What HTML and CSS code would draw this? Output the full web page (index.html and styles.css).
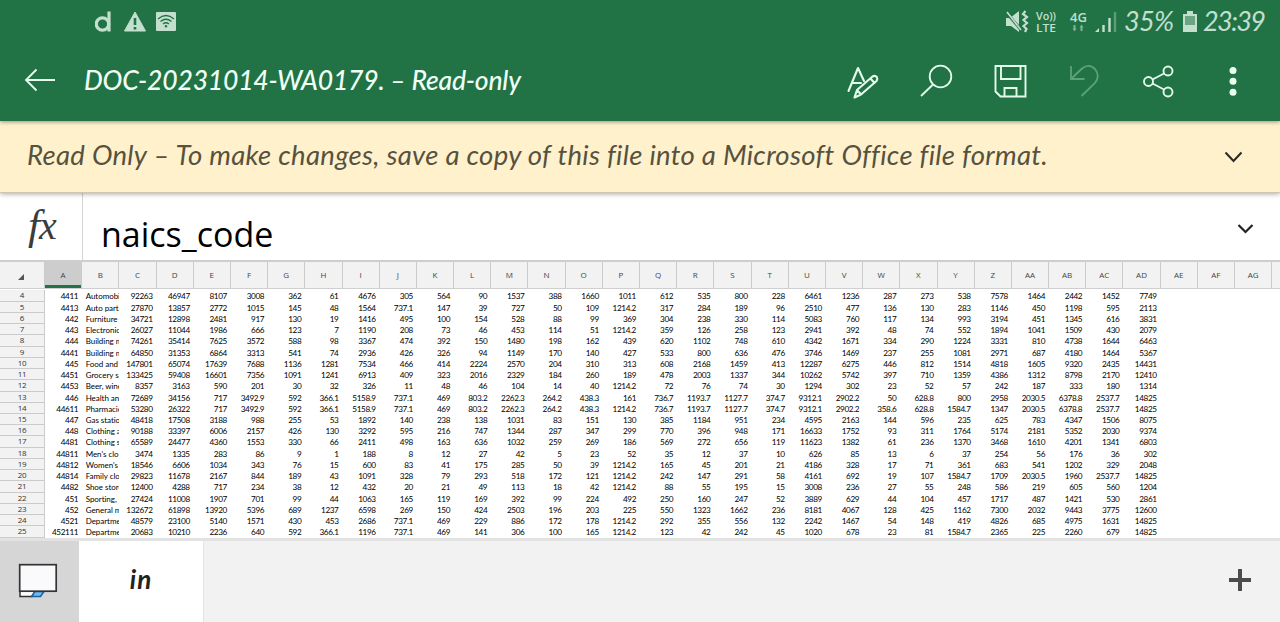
FILE: index.html
```html
<!DOCTYPE html>
<html lang="en">
<head>
<meta charset="utf-8">
<title>DOC-20231014-WA0179.</title>
<link rel="stylesheet" href="styles.css">
</head>
<body>
<div class="app">
  <header class="top">
    <div class="status">
      <svg class="status-left" width="84" height="24" viewBox="0 0 84 24">
        <g fill="none" stroke="#c3dfcd" stroke-width="3.2"><circle cx="7.500" cy="14" r="6.2"/><path d="M14 1.5V21.5"/></g>
        <path d="M40 2L50.500 21H29.500Z" fill="#c3dfcd" stroke="#c3dfcd" stroke-linejoin="round"/>
        <path d="M40 8V15M40 17V19.500" stroke="#217346" stroke-width="2.600"/>
        <rect x="61" y="2" width="20" height="19" rx="1" fill="#c3dfcd"/>
        <g fill="none" stroke="#217346" stroke-width="1.300"><path d="M63 9Q71 2 79 9M65.500 11.500Q71 7 76.500 11.500M68 14Q71 11.500 74 14"/></g>
        <circle cx="71" cy="16.200" r="1.200" fill="#217346"/>
      </svg>
      <svg class="status-right" width="272" height="43" viewBox="0 -9 272 43" fill="#c3dfcd">
        <path d="M6 9H10L19 2V23L11 17H6Z"/><path d="M6 3L22 22" stroke="#217346" stroke-width="3"/><path d="M7 3L21 21" stroke="#c3dfcd" stroke-width="1.600"/>
        <path d="M25.500 2L23 5L27 8L23.500 11L27 14L23.500 17L26.500 20L25 23" fill="none" stroke="#c3dfcd" stroke-width="2.200"/>
        <text x="36" y="10.500" class="tiny" textLength="20" lengthAdjust="spacingAndGlyphs">Vo))</text>
        <text x="36" y="22.700" class="tiny" textLength="20" lengthAdjust="spacingAndGlyphs">LTE</text>
        <text x="70" y="12.500" class="tiny net" textLength="17">4G</text>
        <path d="M74.500 16V20M81.500 18V22" stroke="#7fb393" stroke-width="2"/><path d="M72.500 19.500H76.500L74.500 22.500ZM79.500 18.500H83.500L81.500 15.500Z" fill="#7fb393"/>
        <path d="M95 23L99 19V23Z"/><path d="M103.500 23V16M109.500 23V9" stroke="#c3dfcd" stroke-width="2.400"/><path d="M115 23V3" stroke="#5c9c77" stroke-width="2.400"/>
        <text x="124" y="22" class="pen" textLength="50">35%</text>
        <path d="M183 5H187V2H193V5H197V23H183Z"/><rect x="185" y="7" width="10" height="9" fill="#6ba583"/>
        <text x="203" y="22" class="pen" textLength="63">23:39</text>
      </svg>
    </div>
    <div class="appbar">
      <svg class="back" width="34" height="26" viewBox="0 0 34 26" fill="none" stroke="#e8fff0" stroke-width="1.800"><path d="M32 13H3M13.500 2.500L3 13L13.500 23.500"/></svg>
      <h1 class="title">DOC-20231014-WA0179. – Read-only</h1>
      <nav class="tools">
        <span class="tool"><svg width="36" height="36" viewBox="0 0 36 36" fill="none" stroke="#e4fbec" stroke-width="2.100" stroke-linejoin="round" stroke-linecap="round"><path d="M3.500 27L13 4L19 17M7.500 19H16"/><path d="M9.500 33.500L12 26L27.500 12.500Q30 11 31.800 13Q33 15 31.500 17L16 30.500ZM12 26L16 30.500M25.500 14.500L29.500 19"/></svg></span>
        <span class="tool"><svg width="36" height="36" viewBox="0 0 36 36" fill="none" stroke="#e4fbec" stroke-width="1.800"><circle cx="21.500" cy="12.500" r="10.800"/><path d="M14 20.500L2 32"/></svg></span>
        <span class="tool"><svg width="36" height="36" viewBox="0 0 36 36" fill="none" stroke="#e4fbec" stroke-width="1.900"><path d="M2.500 2H32.500V32.500H7.500L2.500 27.500ZM8 2V15H27.500V2M11.500 32V24H23.500V32"/></svg></span>
        <span class="tool"><svg width="36" height="36" viewBox="0 0 36 36" fill="none" stroke="#5da17b" stroke-width="1.800"><path d="M4 2V15H17.500M4 15L15 4.500Q22 -1 28 5Q33.500 12 28 19L14.500 32"/></svg></span>
        <span class="tool"><svg width="36" height="36" viewBox="0 0 36 36" fill="none" stroke="#e4fbec" stroke-width="1.900"><circle cx="7.500" cy="17.500" r="4.500"/><circle cx="27" cy="7" r="4.500"/><circle cx="27" cy="28" r="4.500"/><path d="M11.500 15.500L23 9.500M11.500 19.500L23 25.500"/></svg></span>
        <span class="tool"><svg width="36" height="36" viewBox="0 0 36 36" fill="#e9fff0"><circle cx="18" cy="6.500" r="3.500"/><circle cx="18" cy="17.300" r="3.500"/><circle cx="18" cy="28.300" r="3.500"/></svg></span>
      </nav>
    </div>
  </header>
  <section class="notice">
    <p class="notice-text">Read Only – To make changes, save a copy of this file into a Microsoft Office file format.</p>
    <svg class="chev-big" width="20" height="14" viewBox="0 0 20 14"><path d="M1.500 2.500L9.500 11L17.500 2.500" fill="none" stroke="#2b2a22" stroke-width="2"/></svg>
  </section>
  <section class="formula">
    <div class="fx"><i>f</i><i class="x">x</i></div>
    <div class="value">naics_code</div>
    <svg class="chev" width="18" height="12" viewBox="0 0 18 12"><path d="M2.500 3L9.500 10L16.500 3" fill="none" stroke="#222" stroke-width="2.200"/></svg>
  </section>
  <main class="sheet" id="sheet"></main>
  <footer class="tabs">
    <div class="all-sheets"><svg width="42" height="38" viewBox="0 0 42 38"><path d="M3 27V33.500H15L19 27Z" fill="#fff" stroke="#333" stroke-width="1.500"/><path d="M18 28.500H27L23.500 33.500H14.500Z" fill="#72b8ee" stroke="#1d5f9c" stroke-width="1.500"/><rect x="2.700" y="1.700" width="36.500" height="26.500" fill="#fafafc" stroke="#333" stroke-width="1.700"/></svg></div>
    <div class="tab">in</div>
    <svg class="add" width="22" height="22" viewBox="0 0 22 22"><path d="M11 0V22M0 11H22" stroke="#4c4c4c" stroke-width="4"/></svg>
  </footer>
</div>
<script src="sheet.js"></script>
</body>
</html>
```
FILE: styles.css
```css
* { box-sizing: border-box; }
body { margin: 0; background: #fff; font-family: "Open Sans", sans-serif; }
.app { width: 1280px; height: 622px; display: flex; flex-direction: column; overflow: hidden; }
.top { height: 121px; flex: none; background: #217346; position: relative; z-index: 2; box-shadow: 0 1px 4px rgba(0,0,0,.4); }
.status { height: 43px; display: flex; justify-content: space-between; padding: 0 8px 0 95px; }
.status-left { margin-top: 10px; }
.status-right { flex: none; }
.tiny { font: 600 11px "Open Sans", sans-serif; }
.net { font-size: 13px; }
.pen { font: italic 27px Lato, sans-serif; }
.appbar { height: 78px; display: flex; align-items: center; padding: 0 10px 4px 23px; }
.back { flex: none; }
.title { margin: 0 0 0 27px; font: italic 500 26.500px Lato, sans-serif; letter-spacing: -.2px; color: #effff5; white-space: nowrap; }
.tools { margin-left: auto; display: flex; padding-top: 3px; }
.tool { width: 74px; height: 36px; display: flex; justify-content: center; }
.notice { height: 72px; flex: none; background: #fff1cc; display: flex; justify-content: space-between; align-items: center; padding: 0 36px 0 27px; border-bottom: 1px solid #cfc7b4; box-shadow: 0 1px 5px rgba(0,0,0,.35); position: relative; z-index: 1; }
.notice-text { margin: 0; padding-bottom: 4px; font: italic 27.500px Lato, sans-serif; letter-spacing: .3px; color: #56523f; white-space: nowrap; }
.formula { height: 67px; flex: none; display: flex; align-items: center; padding-right: 26px; background: #fff; }
.fx { width: 83px; height: 67px; border-right: 1px solid #d4d4d4; padding: 8px 0 0 28px; font: 43px/48px "Liberation Serif", serif; color: #3c3c3c; }
.fx .x { font-size: 40px; margin-left: -1px; }
.value { padding: 14px 0 0 18px; font: 34px/40px "Open Sans", sans-serif; color: #000; }
.chev { margin-left: auto; margin-top: 2px; }
.sheet { height: 278px; flex: none; border-top: 2px solid #cecece; overflow: hidden; }
.row, .head { display: grid; grid-template-columns: 45px repeat(34, 37.200px); width: 1280px; overflow: hidden; }
.head { height: 27px; background: #f2f2f2; border-bottom: 1px solid #cfcfcf; font: 8px/26px "Open Sans", sans-serif; color: #444; text-align: center; margin-bottom: 1.400px; }
.head div { border-right: 1px solid #cbcbcb; height: 26px; }
.head .sel { background: #cdcdcd; box-shadow: inset 0 -3px #217346; }
.corner { display: flex; justify-content: flex-end; align-items: flex-end; padding: 0 20px 8px 0; }
.row { height: 11.240px; font: 8.200px/12.400px Lato, sans-serif; letter-spacing: -.38px; color: #000; text-align: right; white-space: nowrap; }
.row div { height: 11.240px; padding-right: 4px; overflow: hidden; }
.row .num { background: #f2f2f2; border-right: 1px solid #cbcbcb; border-bottom: 1px solid #cbcbcb; padding: 0; text-align: center; font: 8px/10.500px "Open Sans", sans-serif; letter-spacing: -.3px; color: #333; }
.row .name { text-align: left; padding: 0 0 0 3.500px; letter-spacing: -.05px; font-size: 8px; }
.tabs { flex: 1; background: #f2f2f2; border-top: 3px solid #e2e2e2; display: flex; align-items: stretch; padding-right: 29px; }
.all-sheets { width: 79px; background: #d6d6d6; padding: 22px 0 0 17px; }
.tab { width: 125px; background: #fff; text-align: center; font: italic bold 26px/76px Lato, sans-serif; letter-spacing: 1px; color: #222; border-right: 1px solid #e4e4e4; }
.add { margin: 28px 0 0 auto; }
```
FILE: sheet.js
```js
const rows = `4|4411|Automobi|92263 46947 8107 3008 362 61 4676 305 564 90 1537 388 1660 1011 612 535 800 228 6461 1236 287 273 538 7578 1464 2442 1452 7749
5|4413|Auto part|27870 13857 2772 1015 145 48 1564 737.1 147 39 727 50 109 1214.2 317 284 189 96 2510 477 136 130 283 1146 450 1198 595 2113
6|442|Furniture|34721 12898 2481 917 130 19 1416 495 100 154 528 88 99 369 304 238 330 114 5083 760 117 134 993 3194 451 1345 616 3831
7|443|Electronic|26027 11044 1986 666 123 7 1190 208 73 46 453 114 51 1214.2 359 126 258 123 2941 392 48 74 552 1894 1041 1509 430 2079
8|444|Building m|74261 35414 7625 3572 588 98 3367 474 392 150 1480 198 162 439 620 1102 748 610 4342 1671 334 290 1224 3331 810 4738 1644 6463
9|4441|Building m|64850 31353 6864 3313 541 74 2936 426 326 94 1149 170 140 427 533 800 636 476 3746 1469 237 255 1081 2971 687 4180 1464 5367
10|445|Food and|147801 65074 17639 7688 1136 1281 7534 466 414 2224 2570 204 310 313 608 2168 1459 413 12287 6275 446 812 1514 4818 1605 9320 2435 14431
11|4451|Grocery st|133425 59408 16601 7356 1091 1241 6913 409 323 2016 2329 184 260 189 478 2003 1337 344 10262 5742 397 710 1359 4386 1312 8798 2170 12410
12|4453|Beer, wine|8357 3163 590 201 30 32 326 11 48 46 104 14 40 1214.2 72 76 74 30 1294 302 23 52 57 242 187 333 180 1314
13|446|Health an|72689 34156 717 3492.9 592 366.1 5158.9 737.1 469 803.2 2262.3 264.2 438.3 161 736.7 1193.7 1127.7 374.7 9312.1 2902.2 50 628.8 800 2958 2030.5 6378.8 2537.7 14825
14|44611|Pharmacie|53280 26322 717 3492.9 592 366.1 5158.9 737.1 469 803.2 2262.3 264.2 438.3 1214.2 736.7 1193.7 1127.7 374.7 9312.1 2902.2 358.6 628.8 1584.7 1347 2030.5 6378.8 2537.7 14825
15|447|Gas statio|48418 17508 3188 988 255 53 1892 140 238 138 1031 83 151 130 385 1184 951 234 4595 2163 144 596 235 625 783 4347 1506 8075
16|448|Clothing a|90188 33397 6006 2157 426 130 3292 595 216 747 1344 287 347 299 770 396 948 171 16633 1752 93 311 1764 5174 2181 5352 2030 9374
17|4481|Clothing s|65589 24477 4360 1553 330 66 2411 498 163 636 1032 259 269 186 569 272 656 119 11623 1382 61 236 1370 3468 1610 4201 1341 6803
18|44811|Men's clo|3474 1335 283 86 9 1 188 8 12 27 42 5 23 52 35 12 37 10 626 85 13 6 37 254 56 176 36 302
19|44812|Women's|18546 6606 1034 343 76 15 600 83 41 175 285 50 39 1214.2 165 45 201 21 4186 328 17 71 361 683 541 1202 329 2048
20|44814|Family clo|29823 11678 2167 844 189 43 1091 328 79 293 518 172 121 1214.2 242 147 291 58 4161 692 19 107 1584.7 1709 2030.5 1960 2537.7 14825
21|4482|Shoe store|12400 4288 717 234 38 12 432 20 21 49 113 18 42 1214.2 88 55 195 15 3008 236 27 55 248 586 219 605 560 1204
22|451|Sporting, h|27424 11008 1907 701 99 44 1063 165 119 169 392 99 224 492 250 160 247 52 3889 629 44 104 457 1717 487 1421 530 2861
23|452|General m|132672 61898 13920 5396 689 1237 6598 269 150 424 2503 196 203 225 550 1323 1662 236 8181 4067 128 425 1162 7300 2032 9443 3775 12600
24|4521|Departme|48579 23100 5140 1571 430 453 2686 737.1 469 229 886 172 178 1214.2 292 355 556 132 2242 1467 54 148 419 4826 685 4975 1631 14825
25|452111|Departme|20683 10210 2236 640 592 366.1 1196 737.1 469 141 306 100 165 1214.2 123 42 242 45 1020 678 23 81 1584.7 2365 225 2260 679 14825`;

const letters = "ABCDEFGHIJKLMNOPQRSTUVWXYZ".split("");
const columns = letters.concat(["AA", "AB", "AC", "AD", "AE", "AF", "AG", ""]);
const cell = (text, cls) => `<div${cls ? ` class="${cls}"` : ""}>${text}</div>`;

const corner = cell('<svg width="6" height="6" viewBox="0 0 6 6"><path d="M6 0V6H0Z" fill="#555"/></svg>', "corner");
let html = `<div class="head">${corner}${columns.map((c, i) => cell(c, i === 0 ? "sel" : "")).join("")}</div>`;
for (const line of rows.split("\n")) {
  const [num, code, name, values] = line.split("|");
  html += `<div class="row">${cell(num, "num")}${cell(code)}${cell(name, "name")}${values.split(" ").map(v => cell(v)).join("")}</div>`;
}
document.getElementById("sheet").innerHTML = html;
```
